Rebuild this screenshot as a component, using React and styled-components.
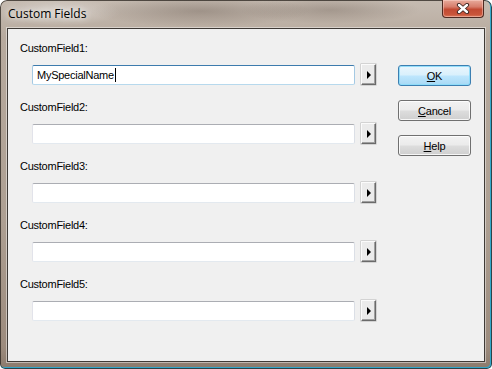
import React from "react";
import styled, { createGlobalStyle } from "styled-components";

const Global = createGlobalStyle`
  html, body { margin: 0; padding: 0; background: #fff; overflow: hidden; }
  * { box-sizing: border-box; }
`;

const Window = styled.div`
  width: 492px;
  height: 369px;
  display: flex;
  flex-direction: column;
  padding: 0 7px 7px 7px;
  border-radius: 7px 7px 5px 5px;
  background:
    radial-gradient(ellipse 110px 16px at 200px 11px, rgba(95, 80, 70, 0.35), transparent),
    radial-gradient(ellipse 90px 14px at 330px 10px, rgba(95, 80, 70, 0.3), transparent),
    radial-gradient(ellipse 60px 14px at 60px 12px, rgba(255, 255, 255, 0.35), transparent),
    linear-gradient(180deg, #c6bcb2 0%, #b7aa9e 10%, #ad9f92 60%, #9c8b7d 94%, #8a7a6c 100%);
  box-shadow: inset 0 0 0 1px rgba(40, 35, 30, 0.75), inset -1px -1px 0 1px rgba(40, 170, 210, 0.9);
  font-family: "Liberation Sans", Arial, sans-serif;
`;

const TitleBar = styled.div`
  height: 28px;
  flex: none;
  display: flex;
  justify-content: space-between;
  align-items: flex-start;
  margin: 0 -7px;
  padding: 0 8px 0 8px;
`;

const Title = styled.div`
  padding-top: 6px;
  font-family: "Open Sans", "Noto Sans", sans-serif;
  font-size: 12px;
  line-height: 16px;
  color: #000;
  text-shadow: 0 0 6px rgba(255, 255, 255, 0.9), 0 0 10px rgba(255, 255, 255, 0.7);
`;

const CloseButton = styled.div`
  width: 42px;
  height: 18px;
  display: flex;
  align-items: center;
  justify-content: center;
  border: 1px solid #4e2a22;
  border-top: none;
  border-radius: 0 0 4px 4px;
  background: linear-gradient(180deg, #e8ab9c 0%, #d77d6b 40%, #c24a33 55%, #c9553a 85%, #dc7a5c 100%);
  box-shadow: inset 0 0 0 1px rgba(255, 220, 210, 0.45);
`;

const Client = styled.div`
  flex: 1;
  display: flex;
  align-items: flex-start;
  background: #f0f0f0;
  border: 1px solid #3e3a36;
  box-shadow: 0 0 0 1px rgba(255, 255, 255, 0.45);
`;

const FieldsColumn = styled.div`
  display: flex;
  flex-direction: column;
  padding: 13px 0 0 12px;
`;

const Field = styled.div`
  display: flex;
  flex-direction: column;
  margin-bottom: 16px;
`;

const Label = styled.div`
  font-size: 11px;
  line-height: 13px;
  height: 13px;
  letter-spacing: -0.25px;
  color: #000;
`;

const InputRow = styled.div`
  display: flex;
  align-items: flex-start;
  margin: 9px 0 0 12px;
  height: 21px;
`;

const TextBox = styled.div`
  width: 323px;
  height: 20px;
  margin-top: 1px;
  display: flex;
  align-items: center;
  padding-left: 4px;
  background: #fff;
  border: 1px solid;
  border-radius: 2px;
  border-color: ${(p) =>
    p.$focused ? "#3d7bad #a4c9e3 #b7d9ed #a4c9e3" : "#abadb3 #dbdfe6 #e3e9ef #e2e3ea"};
  font-size: 11px;
  letter-spacing: -0.25px;
  color: #000;
`;

const Caret = styled.span`
  display: inline-block;
  width: 1px;
  height: 14px;
  margin-left: 1px;
  background: #000;
`;

const ArrowButton = styled.div`
  width: 15px;
  height: 21px;
  margin-left: 6px;
  display: flex;
  align-items: center;
  justify-content: center;
  background: #ebebeb;
  border: 1px solid;
  border-color: #fbfbfb #6a6a6a #6a6a6a #fbfbfb;
  box-shadow: inset -1px -1px 0 #a0a0a0, 0 0 0 0.5px #b5b5b5;
`;

const Triangle = styled.span`
  width: 0;
  height: 0;
  border-left: 4px solid #000;
  border-top: 4px solid transparent;
  border-bottom: 4px solid transparent;
  margin-left: 1px;
`;

const ButtonsColumn = styled.div`
  display: flex;
  flex-direction: column;
  gap: 14px;
  margin: 36px 0 0 22px;
`;

const Button = styled.div`
  width: 73px;
  height: 21px;
  display: flex;
  align-items: center;
  justify-content: center;
  border-radius: 3px;
  border: 1px solid ${(p) => (p.$default ? "#3c7fb1" : "#707070")};
  background: ${(p) =>
    p.$default
      ? "linear-gradient(180deg, #eaf6fd 0%, #d9f0fc 48%, #bee6fd 52%, #a7d9f5 100%)"
      : "linear-gradient(180deg, #f2f2f2 0%, #ebebeb 48%, #dddddd 52%, #cfcfcf 100%)"};
  box-shadow: inset 0 0 0 1px ${(p) => (p.$default ? "rgba(140, 220, 250, 0.9)" : "rgba(255, 255, 255, 0.8)")};
  font-size: 11px;
  letter-spacing: -0.2px;
  color: #000;

  u {
    text-decoration: underline;
    text-underline-offset: 1px;
  }
`;

const fields = ["CustomField1:", "CustomField2:", "CustomField3:", "CustomField4:", "CustomField5:"];

export default function App() {
  return (
    <>
      <Global />
      <Window>
        <TitleBar>
          <Title>Custom Fields</Title>
          <CloseButton>
            <svg width="14" height="11" viewBox="0 0 14 11">
              <path d="M3 2 L11 9 M11 2 L3 9" stroke="#3b2420" strokeWidth="4.2" strokeLinecap="round" fill="none" />
              <path d="M3 2 L11 9 M11 2 L3 9" stroke="#ffffff" strokeWidth="2.4" strokeLinecap="round" fill="none" />
            </svg>
          </CloseButton>
        </TitleBar>
        <Client>
          <FieldsColumn>
            {fields.map((f, i) => (
              <Field key={f}>
                <Label>{f}</Label>
                <InputRow>
                  <TextBox $focused={i === 0}>
                    {i === 0 && (
                      <>
                        <span>MySpecialName</span>
                        <Caret />
                      </>
                    )}
                  </TextBox>
                  <ArrowButton>
                    <Triangle />
                  </ArrowButton>
                </InputRow>
              </Field>
            ))}
          </FieldsColumn>
          <ButtonsColumn>
            <Button $default>
              <span><u>O</u>K</span>
            </Button>
            <Button>
              <span><u>C</u>ancel</span>
            </Button>
            <Button>
              <span><u>H</u>elp</span>
            </Button>
          </ButtonsColumn>
        </Client>
      </Window>
    </>
  );
}
